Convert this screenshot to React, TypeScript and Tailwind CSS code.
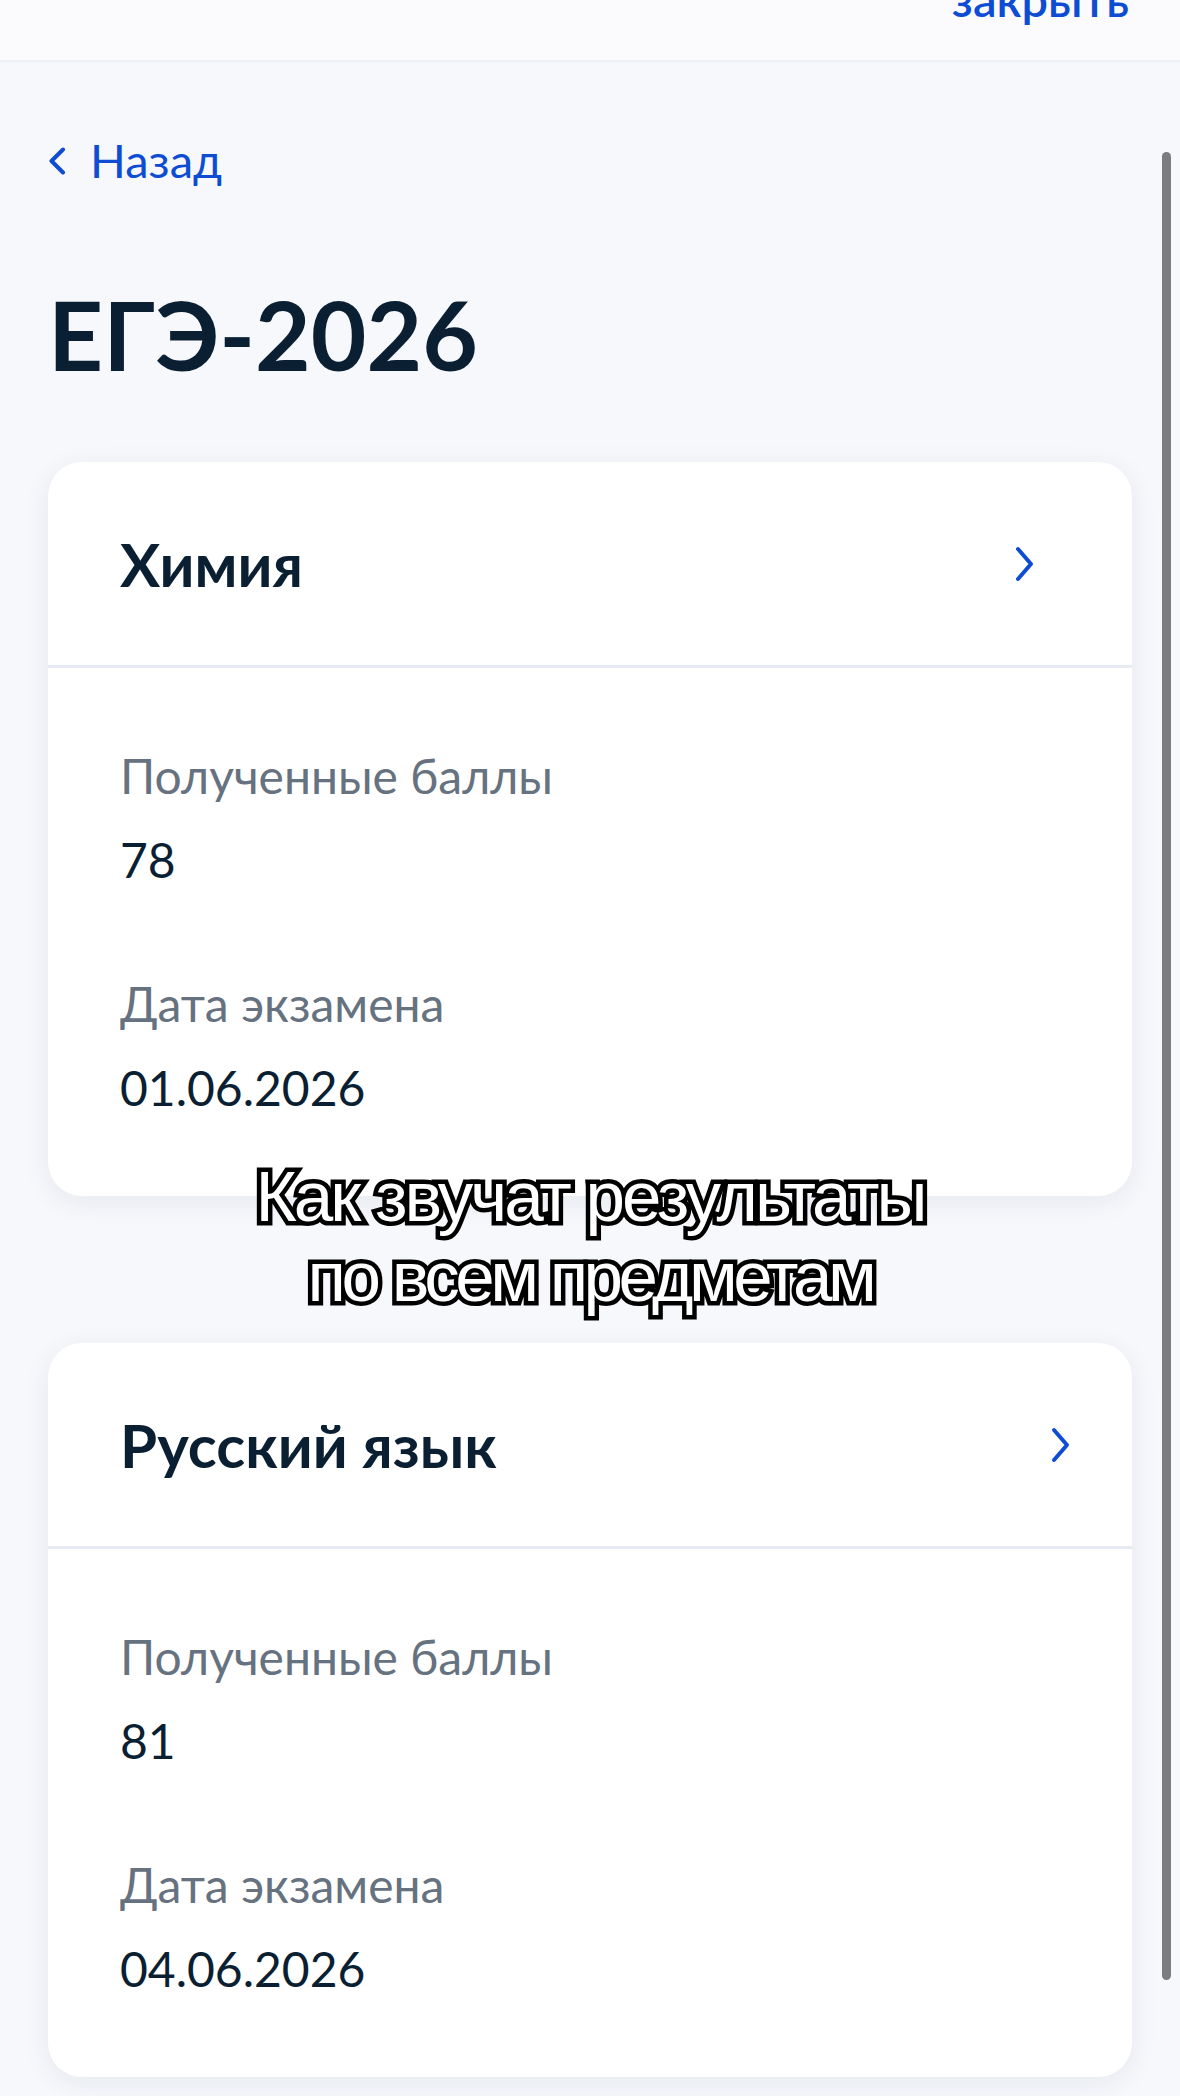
import React from "react";

function ChevronRight({ className }: { className?: string }) {
  return (
    <svg viewBox="0 0 20 36" className={className} fill="none">
      <path d="M3 3 L16 18 L3 33" stroke="#0d4cd3" strokeWidth="4" strokeLinecap="round" strokeLinejoin="round" />
    </svg>
  );
}

function ChevronLeft({ className }: { className?: string }) {
  return (
    <svg viewBox="0 0 18 28" className={className} fill="none">
      <path d="M15 2.5 L3.5 14 L15 25.5" stroke="#0d4cd3" strokeWidth="4" strokeLinecap="round" strokeLinejoin="round" />
    </svg>
  );
}

type Item = { label: string; value: string };

function ResultCard({
  title,
  items,
  chevronPad,
}: {
  title: string;
  items: Item[];
  chevronPad: string;
}) {
  return (
    <div className="bg-white rounded-[34px] shadow-[0_6px_28px_rgba(11,31,51,0.07)] overflow-hidden">
      <div className={`h-[203px] flex items-center justify-between pl-[72px] ${chevronPad}`}>
        <div className="text-[60px] leading-[72px] font-bold text-[#0b1f33]">{title}</div>
        <ChevronRight className="w-[20px] h-[36px]" />
      </div>
      <div className="h-[3px] bg-[#e6ebf3]" />
      <div className="px-[72px] pt-[72px] pb-[72px] flex flex-col gap-[72px]">
        {items.map((it) => (
          <div key={it.label} className="flex flex-col gap-[12px]">
            <div className="text-[48px] leading-[72px] text-[#66727f]">{it.label}</div>
            <div className="text-[48px] leading-[72px] text-[#0b1f33]">{it.value}</div>
          </div>
        ))}
      </div>
    </div>
  );
}

export default function App() {
  return (
    <div className="relative w-[1180px] min-h-[2096px] overflow-hidden bg-[#f6f8fc] font-['Lato','Noto_Sans',sans-serif]">
      {/* top bar */}
      <div className="h-[62px] bg-[#fbfbfd] border-b-2 border-[#eef0f4] flex justify-end pr-[51px]">
        <div className="-mt-[25px] text-[47px] leading-[48px] font-semibold text-[#0d4cd3]">закрыть</div>
      </div>

      <div className="px-[48px]">
        {/* back */}
        <div className="mt-[74px] flex items-center gap-[24px] h-[48px]">
          <ChevronLeft className="w-[18px] h-[28px] mt-[2px]" />
          <span className="text-[47px] leading-[48px] text-[#0d4cd3]">Назад</span>
        </div>

        {/* title */}
        <h1 className="mt-[90px] text-[96px] leading-[120px] font-bold text-[#0b1f33]">ЕГЭ-2026</h1>

        <div className="mt-[68px] flex flex-col gap-[147px]">
          <ResultCard
            title="Химия"
            chevronPad="pr-[97px]"
            items={[
              { label: "Полученные баллы", value: "78" },
              { label: "Дата экзамена", value: "01.06.2026" },
            ]}
          />
          <ResultCard
            title="Русский язык"
            chevronPad="pr-[61px]"
            items={[
              { label: "Полученные баллы", value: "81" },
              { label: "Дата экзамена", value: "04.06.2026" },
            ]}
          />
        </div>
      </div>

      {/* caption overlay */}
      <div className="absolute left-0 right-0 top-[1157px] text-center font-['Liberation_Sans','Arial',sans-serif] text-[71px] leading-[80px] tracking-[-3px] text-white [-webkit-text-stroke:9px_#000] [paint-order:stroke_fill]">
        <div>Как звучат результаты</div>
        <div className="tracking-[-4.5px]">по всем предметам</div>
      </div>

      {/* scroll indicator */}
      <div className="absolute left-[1162px] top-[152px] w-[9px] h-[1828px] rounded-full bg-[#7b7c80]" />
    </div>
  );
}
